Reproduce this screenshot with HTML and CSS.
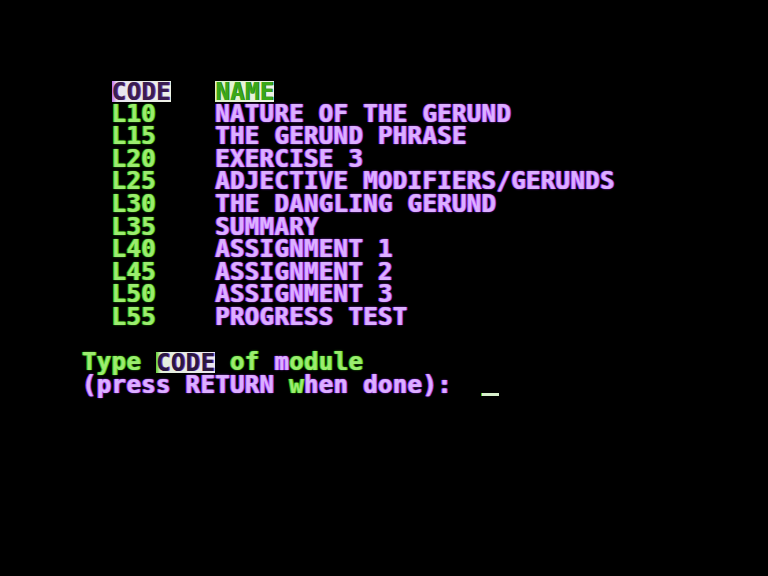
FILE: index.html
```html
<!DOCTYPE html>
<html>
<head>
<meta charset="utf-8">
<link rel="stylesheet" href="styles.css">
</head>
<body>
<div class="screen">
  <div class="line">  <span class="inv inv-code">CODE</span>   <span class="inv inv-name">NAME</span></div>
  <div class="line">  <span class="g">L10</span>    <span class="p">NATURE OF THE GERUND</span></div>
  <div class="line">  <span class="g">L15</span>    <span class="p">THE GERUND PHRASE</span></div>
  <div class="line">  <span class="g">L20</span>    <span class="p">EXERCISE 3</span></div>
  <div class="line">  <span class="g">L25</span>    <span class="p">ADJECTIVE MODIFIERS/GERUNDS</span></div>
  <div class="line">  <span class="g">L30</span>    <span class="p">THE DANGLING GERUND</span></div>
  <div class="line">  <span class="g">L35</span>    <span class="p">SUMMARY</span></div>
  <div class="line">  <span class="g">L40</span>    <span class="p">ASSIGNMENT 1</span></div>
  <div class="line">  <span class="g">L45</span>    <span class="p">ASSIGNMENT 2</span></div>
  <div class="line">  <span class="g">L50</span>    <span class="p">ASSIGNMENT 3</span></div>
  <div class="line">  <span class="g">L55</span>    <span class="p">PROGRESS TEST</span></div>
  <div class="line"> </div>
  <div class="line"><span class="g">Type</span> <span class="inv inv-prompt">CODE</span> <span class="g">of</span> <span class="p">m</span><span class="g">odule</span></div>
  <div class="line"><span class="p">(press RETURN</span> <span class="g">w</span><span class="p">hen done):</span>  <span class="cursor"></span></div>
</div>
</body>
</html>
```

FILE: styles.css
```css
html, body {
  margin: 0;
  padding: 0;
  background: #000;
}
body {
  width: 768px;
  height: 576px;
  overflow: hidden;
}
.screen {
  padding: 80px 0 0 82px;
  font-family: "DejaVu Sans Mono", "Liberation Mono", monospace;
  font-weight: bold;
  font-size: 24px;
  letter-spacing: 0.35px;
  line-height: 22.6px;
  color: #e8e8e8;
}
.line {
  white-space: pre;
  height: 22.6px;
}
.g {
  color: #9cec70;
  text-shadow: -1px 0 #3cb814, 1px 0 #3cb814, 0 0 2px #2a9a0c;
}
.p {
  color: #dcb0ff;
  text-shadow: -1px 0 #a844f0, 1px 0 #a844f0, 0 0 2px #8a28e0;
}
.inv {
  display: inline-block;
  height: 21px;
  line-height: 22px;
  vertical-align: top;
  margin-top: 1px;
}
.inv-code {
  background: linear-gradient(90deg, #c070f0 0, #e8e4f0 5px, #eef2e6 100%);
  color: #3a1e50;
  text-shadow: 1px 0 #7a3aa8;
}
.inv-name {
  background: linear-gradient(90deg, #dcf2c8 0, #f0f4ea 100%);
  color: #3aa81a;
  text-shadow: 1px 0 #2a8010;
}
.inv-prompt {
  background: linear-gradient(90deg, #60d030 0, #e4f0dc 5px, #ece8f2 100%);
  color: #2a1840;
  text-shadow: 1px 0 #8a40c0;
}
.cursor {
  display: inline-block;
  width: 17px;
  height: 3px;
  background: #d8f0cc;
  box-shadow: -1px 0 #50c030;
  vertical-align: -3px;
}
```
